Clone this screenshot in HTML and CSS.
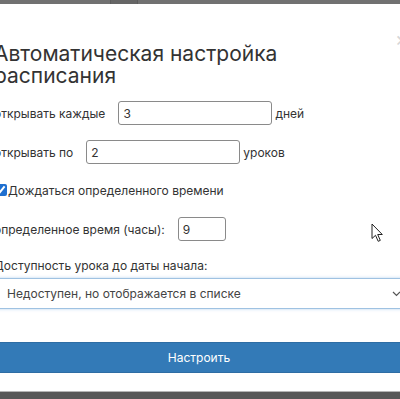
FILE: index.html
```
<!DOCTYPE html>
<html lang="ru">
<head>
<meta charset="utf-8">
<link rel="stylesheet" href="styles.css">
</head>
<body>
<div class="page">
  <div class="topbar"><span class="tab"></span></div>
  <div class="modal">
    <span class="close">×</span>
    <h1 class="title">Автоматическая настройка расписания</h1>
    <div class="row row-1">
      <span class="label">открывать каждые</span>
      <input class="field field-wide" type="text" value="3">
      <span class="suffix">дней</span>
    </div>
    <div class="row row-2">
      <span class="label">открывать по</span>
      <input class="field field-wide" type="text" value="2">
      <span class="suffix">уроков</span>
    </div>
    <label class="row row-check">
      <input class="check" type="checkbox" checked>
      <span>Дождаться определенного времени</span>
    </label>
    <div class="row row-4">
      <span class="label">определенное время (часы):</span>
      <input class="field field-short" type="text" value="9">
    </div>
    <div class="select-label">Доступность урока до даты начала:</div>
    <div class="select">
      <span>Недоступен, но отображается в списке</span>
      <svg class="chev" width="9" height="6" viewBox="0 0 9 6"><path d="M1 1l3.5 3.5L8 1" fill="none" stroke="#555" stroke-width="1.2"/></svg>
    </div>
    <button class="btn">Настроить</button>
  </div>
  <div class="bottombar"></div>
  <svg class="cursor" width="14" height="20" viewBox="0 0 14 20"><path d="M1 1 L1 15.5 L4.5 12.3 L7.2 18.3 L9.3 17.4 L6.7 11.5 L11.3 11.5 Z" fill="#fff" stroke="#222" stroke-width="1" stroke-linejoin="round"/></svg>
</div>
</body>
</html>
```
FILE: styles.css
```
* { box-sizing: border-box; }
html, body { margin: 0; padding: 0; background: #fff; }
body { font-family: Inter, "Noto Sans", sans-serif; color: #333; overflow: hidden; }
.page { position: relative; width: 400px; height: 399px; display: flex; flex-direction: column; overflow: hidden; }
.topbar { height: 4px; background: #717171; flex: none; position: relative; }
.tab { position: absolute; left: 110px; top: 0; width: 28px; height: 4px; background: #666; border-left: 1px solid #5c5c5c; border-right: 1px solid #5c5c5c; }
.modal { position: relative; flex: none; height: 387px; width: 418px; margin-left: -6px; padding-top: 39px; background: #fff; display: flex; flex-direction: column; align-items: flex-start; }
.close { position: absolute; left: 401px; top: 25px; font-size: 20px; color: #d6d6d6; line-height: 20px; }
.title { margin: 0; font-size: 21px; font-weight: 400; line-height: 22px; color: #333; width: 300px; }
.row { display: flex; align-items: center; font-size: 12px; height: 24px; }
.row-1 { margin-top: 14px; }
.row-2 { margin-top: 15px; }
.row-check { margin-top: 14px; margin-left: 1px; }
.row-4 { margin-top: 15px; }
.label { margin-right: 13px; }
.suffix { margin-left: 3px; }
.field { height: 24px; border: 1px solid #8a8a8a; border-radius: 3px; padding: 0 4px; font: 12px Inter, "Noto Sans", sans-serif; color: #333; background: #fff; outline: none; }
.field-wide { width: 154px; }
.field-short { width: 48px; }
.check { width: 12px; height: 12px; margin: 0 1px 0 0; accent-color: #1e6fd0; }
.select-label { font-size: 12px; margin-top: 17px; line-height: 16px; }
.select { margin-top: 4px; width: 418px; height: 31px; border: 1px solid #9fc2e2; box-shadow: 0 0 3px rgba(102,160,220,0.45); display: flex; align-items: center; justify-content: space-between; padding: 0 10px 0 12px; font-size: 12px; color: #444; background: #fff; }
.btn { margin-top: 33px; width: 418px; height: 31px; background: #337ab7; border: 1px solid #2e6da4; color: #fff; font: 12px Inter, "Noto Sans", sans-serif; padding: 0 8px 0 0; }
.bottombar { flex: 1; background: #585858; border-top: 1px solid #b5b5b5; }
.cursor { position: absolute; left: 371px; top: 223px; }
```
